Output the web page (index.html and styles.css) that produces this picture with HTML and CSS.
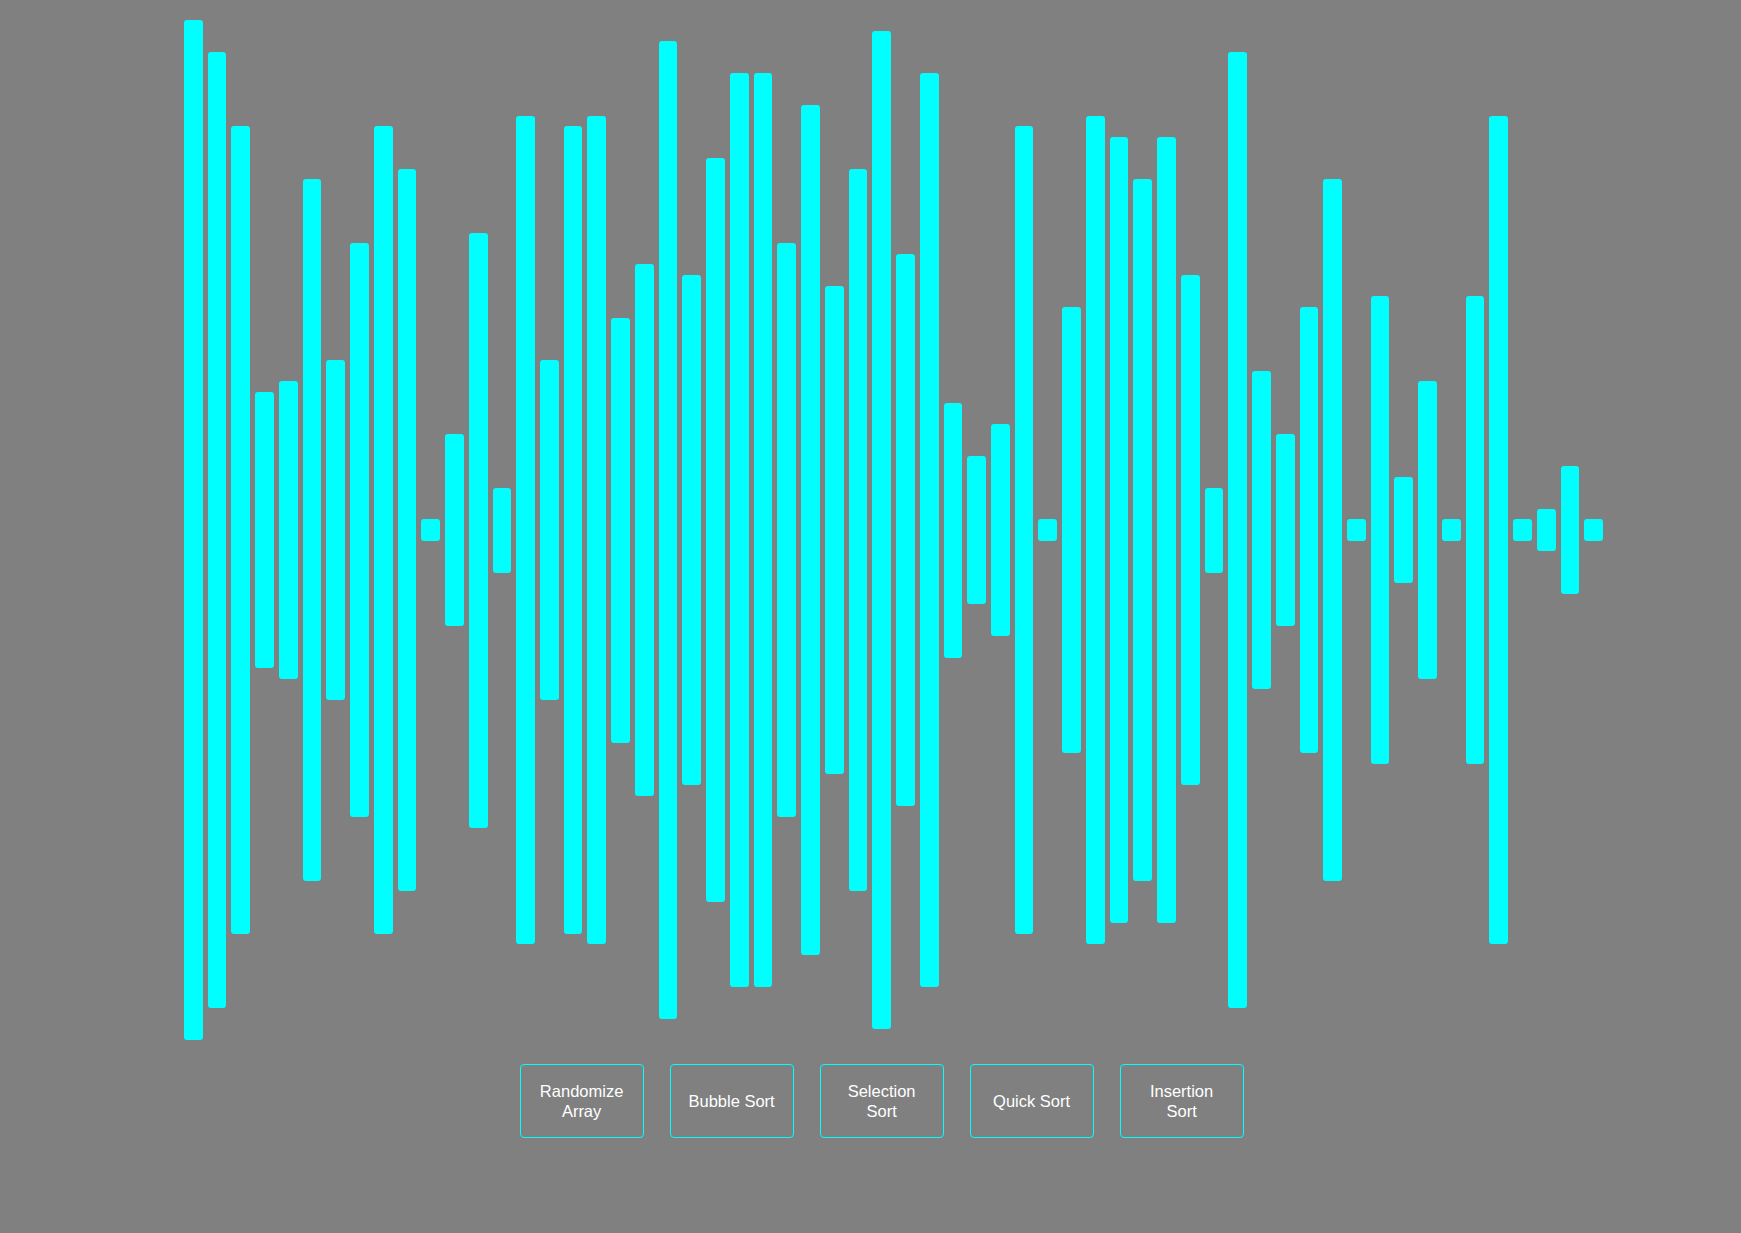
FILE: index.html
```html
<!DOCTYPE html>
<html lang="en">
<head>
	<meta charset="UTF-8">
	<title>Sorting Visualizer</title>
	<link rel="stylesheet" href="styles.css">
</head>
<body>
	<div class="array">
		<div class="bar" style="--v:48"></div>
		<div class="bar" style="--v:45"></div>
		<div class="bar" style="--v:38"></div>
		<div class="bar" style="--v:13"></div>
		<div class="bar" style="--v:14"></div>
		<div class="bar" style="--v:33"></div>
		<div class="bar" style="--v:16"></div>
		<div class="bar" style="--v:27"></div>
		<div class="bar" style="--v:38"></div>
		<div class="bar" style="--v:34"></div>
		<div class="bar" style="--v:1"></div>
		<div class="bar" style="--v:9"></div>
		<div class="bar" style="--v:28"></div>
		<div class="bar" style="--v:4"></div>
		<div class="bar" style="--v:39"></div>
		<div class="bar" style="--v:16"></div>
		<div class="bar" style="--v:38"></div>
		<div class="bar" style="--v:39"></div>
		<div class="bar" style="--v:20"></div>
		<div class="bar" style="--v:25"></div>
		<div class="bar" style="--v:46"></div>
		<div class="bar" style="--v:24"></div>
		<div class="bar" style="--v:35"></div>
		<div class="bar" style="--v:43"></div>
		<div class="bar" style="--v:43"></div>
		<div class="bar" style="--v:27"></div>
		<div class="bar" style="--v:40"></div>
		<div class="bar" style="--v:23"></div>
		<div class="bar" style="--v:34"></div>
		<div class="bar" style="--v:47"></div>
		<div class="bar" style="--v:26"></div>
		<div class="bar" style="--v:43"></div>
		<div class="bar" style="--v:12"></div>
		<div class="bar" style="--v:7"></div>
		<div class="bar" style="--v:10"></div>
		<div class="bar" style="--v:38"></div>
		<div class="bar" style="--v:1"></div>
		<div class="bar" style="--v:21"></div>
		<div class="bar" style="--v:39"></div>
		<div class="bar" style="--v:37"></div>
		<div class="bar" style="--v:33"></div>
		<div class="bar" style="--v:37"></div>
		<div class="bar" style="--v:24"></div>
		<div class="bar" style="--v:4"></div>
		<div class="bar" style="--v:45"></div>
		<div class="bar" style="--v:15"></div>
		<div class="bar" style="--v:9"></div>
		<div class="bar" style="--v:21"></div>
		<div class="bar" style="--v:33"></div>
		<div class="bar" style="--v:1"></div>
		<div class="bar" style="--v:22"></div>
		<div class="bar" style="--v:5"></div>
		<div class="bar" style="--v:14"></div>
		<div class="bar" style="--v:1"></div>
		<div class="bar" style="--v:22"></div>
		<div class="bar" style="--v:39"></div>
		<div class="bar" style="--v:1"></div>
		<div class="bar" style="--v:2"></div>
		<div class="bar" style="--v:6"></div>
		<div class="bar" style="--v:1"></div>
	</div>
	<div class="controls">
		<button>Randomize Array</button>
		<button>Bubble Sort</button>
		<button>Selection Sort</button>
		<button>Quick Sort</button>
		<button>Insertion Sort</button>
	</div>
</body>
</html>
```

FILE: styles.css
```css
*{margin: 0;padding: 0;}
body{
	background-color: #808080;
	font-family: "Liberation Sans", Arial, sans-serif;
}
.array{
	display: flex;
	align-items: center;
	gap: 5px;
	height: 1020px;
	padding: 20px 0 0 184px;
}
.bar{
	flex: none;
	width: 18.74px;
	height: calc(var(--v) * 21.25px);
	background-color: #00ffff;
	border-radius: 3px;
}
.controls{
	display: flex;
	gap: 26px;
	margin-top: 24px;
	padding-left: 519.6px;
}
.controls button{
	box-sizing: border-box;
	width: 124px;
	height: 74px;
	padding: 0 16px;
	background: transparent;
	border: 1px solid #00ffff;
	border-radius: 4px;
	color: #fff;
	font-family: "Liberation Sans", Arial, sans-serif;
	font-size: 16.5px;
	line-height: 20px;
}
```
